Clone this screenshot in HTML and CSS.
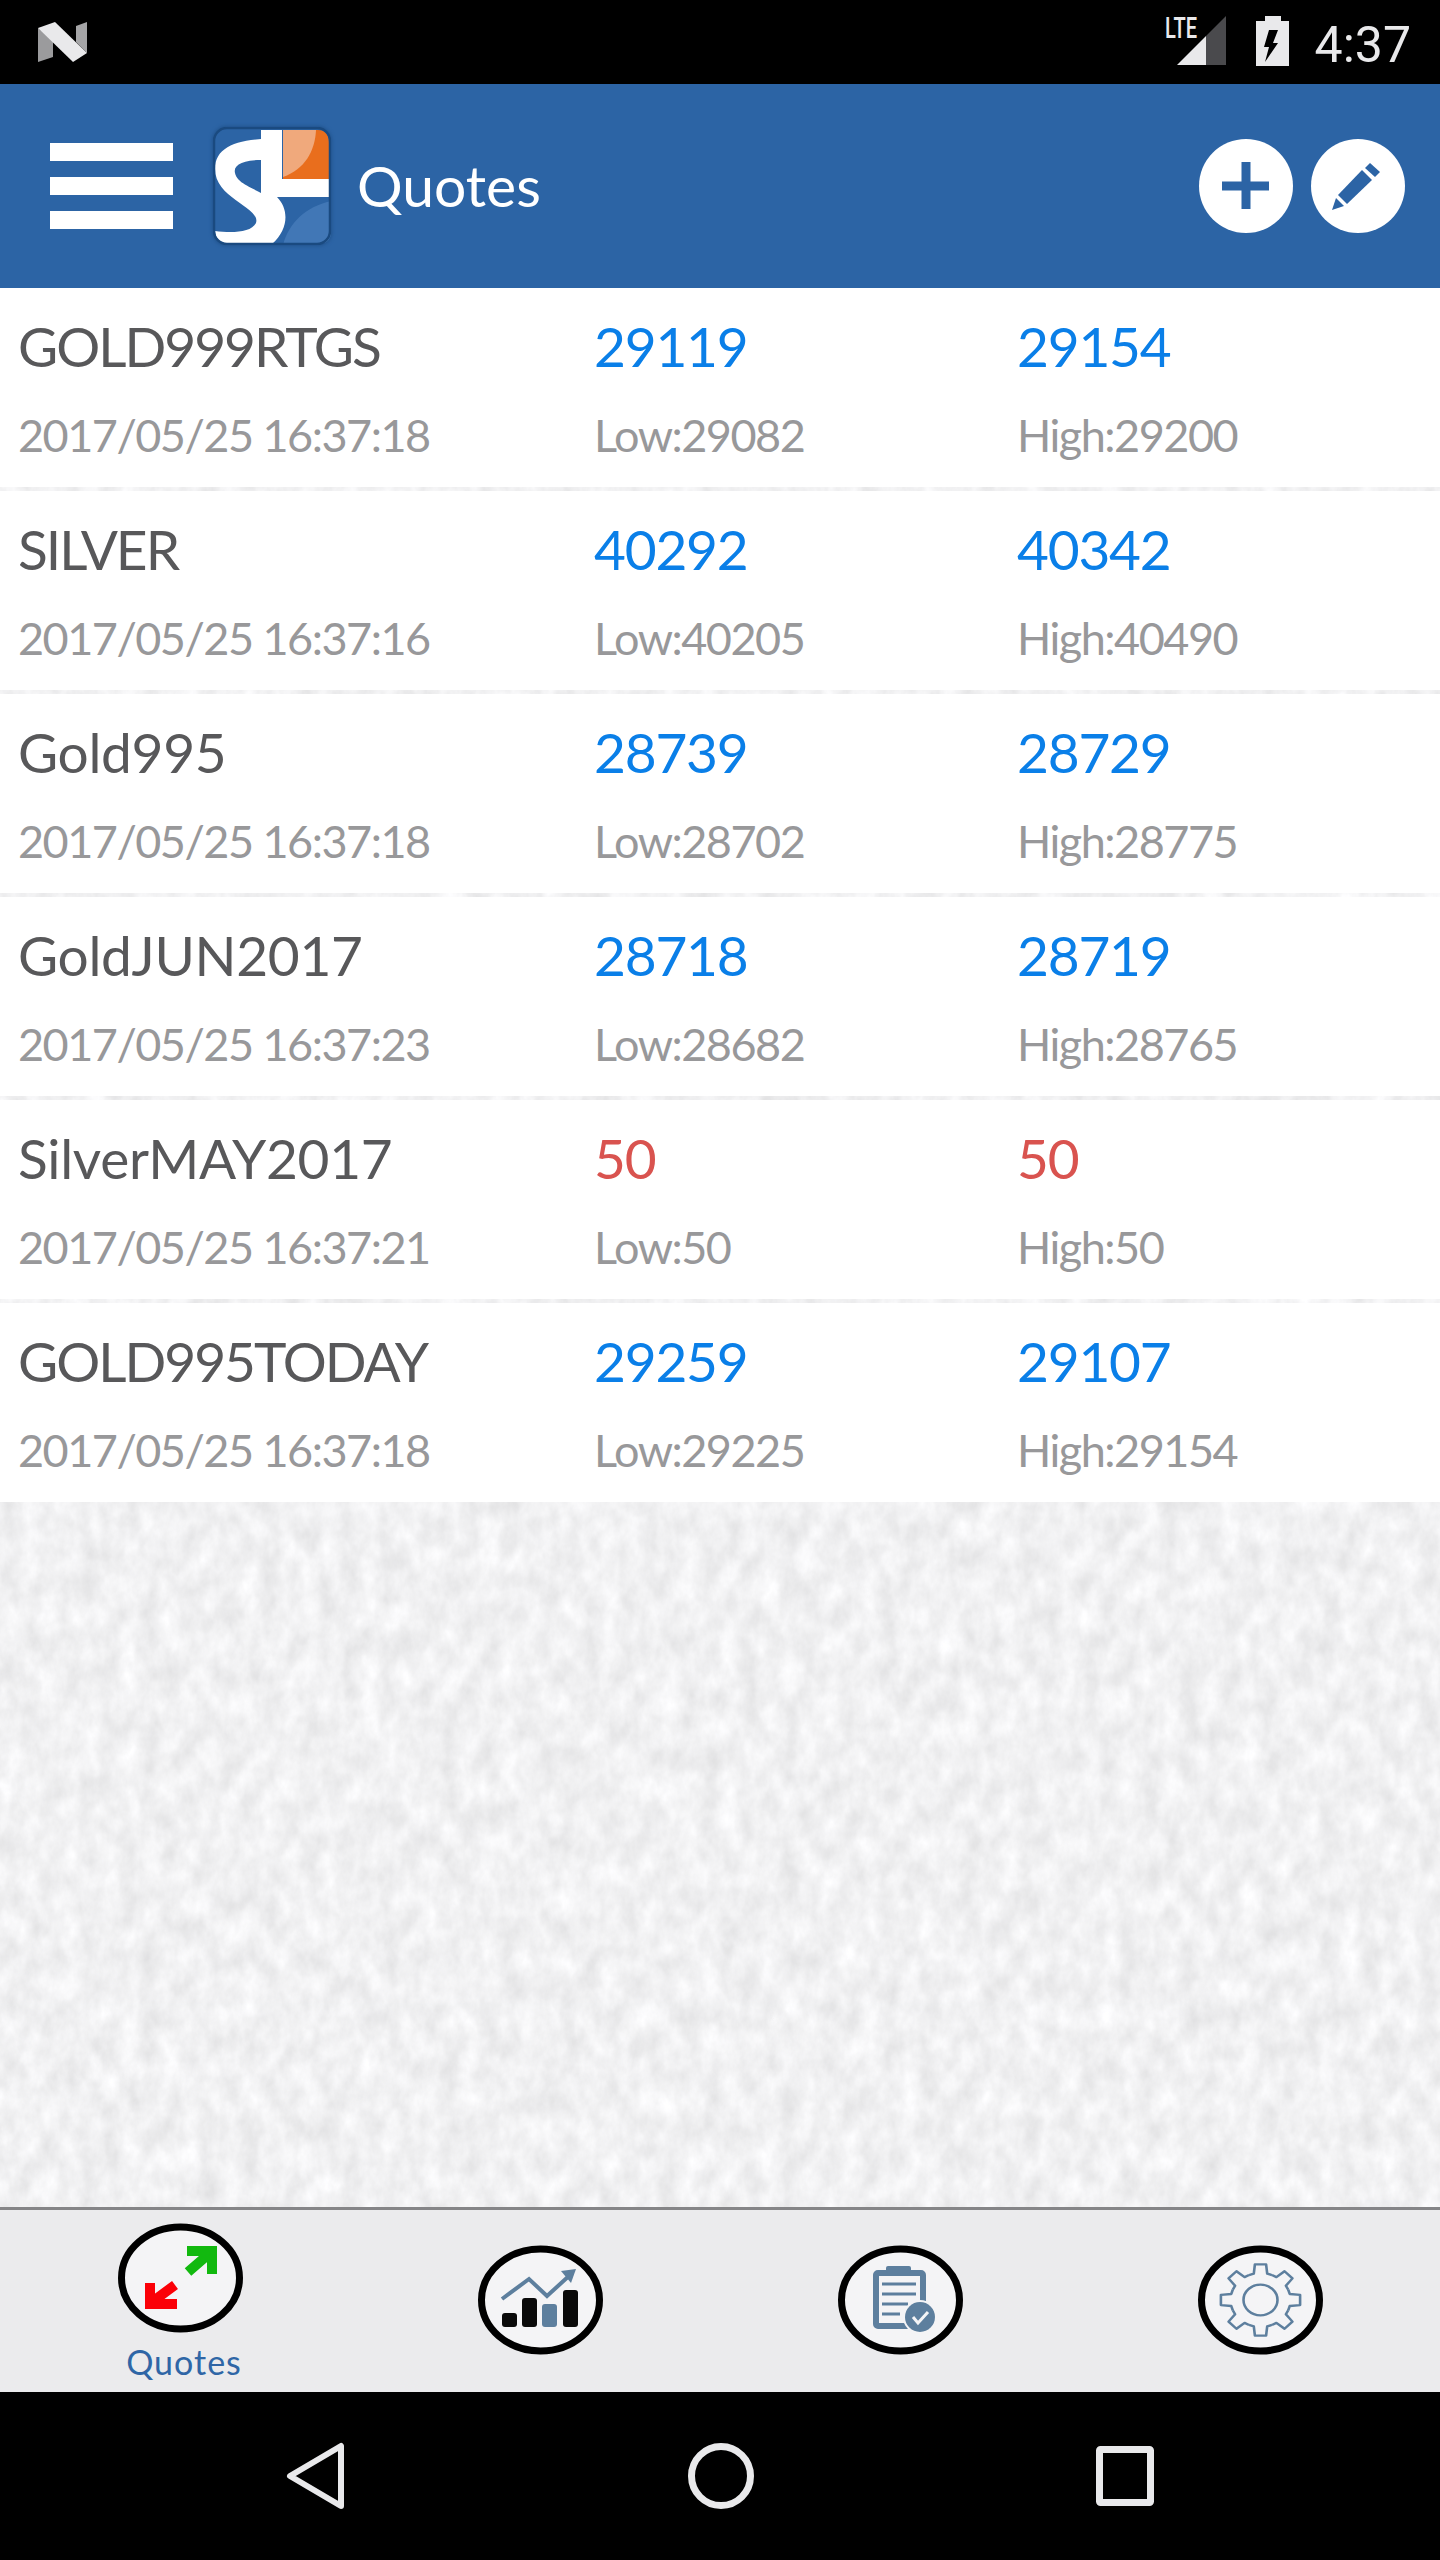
FILE: index.html
```html
<!DOCTYPE html>
<html lang="en">
<head>
    <meta charset="UTF-8">
    <meta name="viewport" content="width=device-width, initial-scale=1.0">
    <title>Quotes</title>
    <link rel="stylesheet" href="styles.css">
</head>
<body>
    <!-- Android status bar -->
    <div class="status-bar">
        <svg class="n-logo" width="50" height="41" viewBox="0 0 50 41">
            <polygon points="0,7 15,19 15,36 0,41" fill="#9b9b9d"/>
            <polygon points="38,5 49,1 49,32 38,21" fill="#a5a5a7"/>
            <polygon points="0,7 17,1 49,32 35,41" fill="#e9e9eb"/>
        </svg>
        <div class="status-right">
            <svg class="signal" width="61" height="59" viewBox="0 -10 61 59">
                <polygon points="41,20 61,0 61,49 41,49" fill="#4a4a4d"/>
                <polygon points="12,49 41,20 41,49" fill="#e9e9eb"/>
                <text class="lte" x="0" y="22" textLength="32" lengthAdjust="spacingAndGlyphs">LTE</text>
            </svg>
            <svg class="battery" width="33" height="50" viewBox="0 0 33 50">
                <path d="M9 0H25V5H33V50H0V5H9Z" fill="#e9e9eb"/>
                <polygon points="13,14 22,14 17,27 22,27 9,46 13,31 8,31" fill="#000"/>
            </svg>
            <span class="clock">4:37</span>
        </div>
    </div>

    <!-- App header -->
    <header class="app-header">
        <div class="burger"><span></span><span></span><span></span></div>
        <svg class="logo" width="118" height="118" viewBox="0 0 118 118">
            <rect x="1" y="1" width="116" height="116" rx="13" fill="#2c64a5"/>
            <path d="M70 118C76 96 92 80 118 74V105Q118 117 105 117Z" fill="#4177b6"/>
            <path d="M70 3H105Q116 3 116 16V52H70Z" fill="#e96e1d"/>
            <path d="M70 3H103C102 24 92 42 70 50Z" fill="#f0a97c"/>
            <path fill="#fff" fill-rule="evenodd" d="M48 3H69V52H116V70H64C76 82 76 102 59 117H18Q3 117 2 104C18 106 38 106 43 96C48 80 2 72 2 42C2 22 20 14 48 12ZM48 33C30 33 20 38 22 46C24 56 38 60 48 66Z"/>
            <rect x="1" y="1" width="116" height="116" rx="13" fill="none" stroke="#1a4a80" stroke-width="2.5"/>
        </svg>
        <h1 class="title">Quotes</h1>
        <div class="header-actions">
            <button class="round-btn">
                <svg width="94" height="94" viewBox="0 0 94 94">
                    <path d="M23 47H70M47 23V70" stroke="#2c64a5" stroke-width="9"/>
                </svg>
            </button>
            <button class="round-btn">
                <svg width="94" height="94" viewBox="0 0 94 94">
                    <g fill="#2c64a5">
                        <polygon points="59,24 69,33 64,38 54,29"/>
                        <polygon points="51,31 61,41 36,65 27,56"/>
                        <polygon points="25,59 33,67 21,71"/>
                    </g>
                </svg>
            </button>
        </div>
    </header>

    <!-- Quote rows -->
    <main class="content">
        <div class="quote-list">
            <div class="quote-row">
                <div class="name caps">GOLD999RTGS</div>
                <div class="price">29119</div>
                <div class="price">29154</div>
                <div class="sub">2017/05/25 16:37:18</div>
                <div class="sub">Low:29082</div>
                <div class="sub">High:29200</div>
            </div>
            <div class="quote-row">
                <div class="name caps">SILVER</div>
                <div class="price">40292</div>
                <div class="price">40342</div>
                <div class="sub">2017/05/25 16:37:16</div>
                <div class="sub">Low:40205</div>
                <div class="sub">High:40490</div>
            </div>
            <div class="quote-row">
                <div class="name">Gold995</div>
                <div class="price">28739</div>
                <div class="price">28729</div>
                <div class="sub">2017/05/25 16:37:18</div>
                <div class="sub">Low:28702</div>
                <div class="sub">High:28775</div>
            </div>
            <div class="quote-row">
                <div class="name">GoldJUN2017</div>
                <div class="price">28718</div>
                <div class="price">28719</div>
                <div class="sub">2017/05/25 16:37:23</div>
                <div class="sub">Low:28682</div>
                <div class="sub">High:28765</div>
            </div>
            <div class="quote-row">
                <div class="name">SilverMAY2017</div>
                <div class="price down">50</div>
                <div class="price down">50</div>
                <div class="sub">2017/05/25 16:37:21</div>
                <div class="sub">Low:50</div>
                <div class="sub">High:50</div>
            </div>
            <div class="quote-row">
                <div class="name caps">GOLD995TODAY</div>
                <div class="price">29259</div>
                <div class="price">29107</div>
                <div class="sub">2017/05/25 16:37:18</div>
                <div class="sub">Low:29225</div>
                <div class="sub">High:29154</div>
            </div>
        </div>
    </main>

    <!-- Bottom tabs -->
    <nav class="tab-bar">
        <div class="tab tab-active">
            <svg width="125" height="110" viewBox="0 0 125 110">
                <ellipse cx="62.5" cy="55" rx="59" ry="51" fill="#f4f4f6" stroke="#000" stroke-width="7"/>
                <path d="M69 28H94V51M92 30L70 49" fill="none" stroke="#12b90f" stroke-width="10"/>
                <path d="M32 60V81H59M34 79L57 62" fill="none" stroke="#fb0007" stroke-width="10"/>
            </svg>
            <span class="tab-label">Quotes</span>
        </div>
        <div class="tab">
            <svg width="125" height="110" viewBox="0 0 125 110">
                <ellipse cx="62.5" cy="55" rx="59" ry="51" fill="#f4f4f6" stroke="#000" stroke-width="7"/>
                <path d="M24 54L51 34L69 51L92 30" fill="none" stroke="#5d7f9e" stroke-width="4"/>
                <polygon points="83,26 98,24 93,38" fill="#5d7f9e"/>
                <rect x="24" y="68" width="15" height="14" rx="3" fill="#0a0a0a"/>
                <rect x="44" y="53" width="15" height="29" rx="3" fill="#0a0a0a"/>
                <rect x="64" y="59" width="15" height="23" rx="3" fill="#5d7f9e"/>
                <rect x="85" y="45" width="15" height="37" rx="3" fill="#0a0a0a"/>
            </svg>
        </div>
        <div class="tab">
            <svg width="125" height="110" viewBox="0 0 125 110">
                <ellipse cx="62.5" cy="55" rx="59" ry="51" fill="#f4f4f6" stroke="#000" stroke-width="7"/>
                <rect x="38" y="28" width="47" height="53" rx="2" fill="none" stroke="#5d7f9e" stroke-width="6"/>
                <rect x="48" y="21" width="25" height="7" rx="2" fill="#5d7f9e"/>
                <path d="M44 39H78M44 49H78M44 59H70M44 69H62" stroke="#5d7f9e" stroke-width="3"/>
                <circle cx="82" cy="72" r="17" fill="#f4f4f6"/>
                <circle cx="82" cy="72" r="15" fill="#5d7f9e"/>
                <path d="M75 72L80 78L90 67" fill="none" stroke="#f4f4f6" stroke-width="3"/>
            </svg>
        </div>
        <div class="tab">
            <svg width="125" height="110" viewBox="0 0 125 110">
                <ellipse cx="62.5" cy="55" rx="59" ry="51" fill="#f4f4f6" stroke="#000" stroke-width="7"/>
                <g transform="translate(62.5 55) scale(1 .9)" fill="none" stroke="#5d7f9e" stroke-width="2.6" stroke-linejoin="round">
                    <path id="tooth" d="M-11.5 -27.7L-6.7 -29.2L-5.6 -39.6H5.6L6.7 -29.2L11.5 -27.7"/>
                    <use href="#tooth" transform="rotate(45)"/>
                    <use href="#tooth" transform="rotate(90)"/>
                    <use href="#tooth" transform="rotate(135)"/>
                    <use href="#tooth" transform="rotate(180)"/>
                    <use href="#tooth" transform="rotate(225)"/>
                    <use href="#tooth" transform="rotate(270)"/>
                    <use href="#tooth" transform="rotate(315)"/>
                    <circle r="17"/>
                </g>
            </svg>
        </div>
    </nav>

    <!-- Android navigation bar -->
    <div class="nav-bar">
        <svg width="60" height="70" viewBox="0 0 60 70">
            <path d="M55 5V65L4 35Z" fill="none" stroke="#e9e9eb" stroke-width="6" stroke-linejoin="round"/>
        </svg>
        <svg width="66" height="66" viewBox="0 0 66 66">
            <circle cx="33" cy="33" r="29.5" fill="none" stroke="#e9e9eb" stroke-width="7"/>
        </svg>
        <svg width="58" height="60" viewBox="0 0 58 60">
            <rect x="3.5" y="3.5" width="51" height="53" rx="1" fill="none" stroke="#e9e9eb" stroke-width="7"/>
        </svg>
    </div>
</body>
</html>
```

FILE: styles.css
```css
body {
    font-family: 'Lato', 'Open Sans', sans-serif;
    background-color: #000;
    margin: 0;
    width: 1440px;
    height: 2560px;
    display: flex;
    flex-direction: column;
    overflow: hidden;
}

/* status bar */
.status-bar {
    height: 84px;
    flex: none;
    display: flex;
    align-items: flex-start;
    justify-content: space-between;
    padding: 6px 29px 0 38px;
    box-sizing: border-box;
    background-color: #000;
}

.n-logo {
    margin-top: 15px;
}

.status-right {
    display: flex;
    align-items: flex-start;
}

.lte {
    font-family: 'Roboto', sans-serif;
    font-size: 29px;
    font-weight: 500;
    fill: #e9e9eb;
}

.battery {
    margin: 10px 0 0 30px;
}

.clock {
    margin: 10px 0 0 26px;
    font-family: 'Roboto', sans-serif;
    font-size: 50px;
    line-height: 58px;
    color: #e9e9eb;
}

/* header */
.app-header {
    height: 204px;
    flex: none;
    display: flex;
    align-items: center;
    padding: 0 35px 0 50px;
    box-sizing: border-box;
    background-color: #2c64a5;
}

.burger {
    width: 123px;
    display: flex;
    flex-direction: column;
    gap: 16px;
}

.burger span {
    height: 18px;
    background-color: #fff;
}

.logo {
    margin-left: 40px;
    filter: drop-shadow(0 0 2px #1a4a80);
}

.title {
    margin: 0 0 3px 26px;
    font-size: 57px;
    font-weight: 400;
    color: #fff;
}

.header-actions {
    margin-left: auto;
    display: flex;
    gap: 18px;
}

.round-btn {
    width: 94px;
    height: 94px;
    padding: 0;
    border: none;
    border-radius: 50%;
    background-color: #fff;
}

.round-btn svg {
    display: block;
}

/* quote list */
.content {
    flex: 1;
    background-color: #f2f2f4;
    background-image: url("data:image/svg+xml,%3Csvg xmlns='http://www.w3.org/2000/svg' width='1440' height='1920'%3E%3Cfilter id='n' color-interpolation-filters='sRGB'%3E%3CfeTurbulence type='fractalNoise' baseFrequency='.05 .035' numOctaves='5' seed='4'/%3E%3CfeColorMatrix values='.14 0 0 0 .875 .14 0 0 0 .875 .14 0 0 0 .88 0 0 0 0 1'/%3E%3C/filter%3E%3Crect width='1440' height='1920' filter='url(%23n)'/%3E%3C/svg%3E");
}

.quote-list {
    display: flex;
    flex-direction: column;
    gap: 4px;
}

.quote-row {
    height: 199px;
    display: grid;
    grid-template-columns: 576px 423px 1fr;
    grid-template-rows: 90px 85px;
    padding: 24px 0 0 18px;
    box-sizing: border-box;
    background-color: #fff;
}

.name, .price {
    font-size: 55px;
    line-height: 68px;
    letter-spacing: -1.2px;
    color: #58585a;
}

.name {
    letter-spacing: -0.3px;
}

.name.caps {
    letter-spacing: -2px;
}

.price {
    color: #0a7fe8;
}

.price.down {
    color: #d9534f;
}

.sub {
    font-size: 45px;
    line-height: 66px;
    letter-spacing: -1.5px;
    color: #98989a;
}

/* bottom tabs */
.tab-bar {
    height: 185px;
    flex: none;
    display: grid;
    grid-template-columns: repeat(4, 1fr);
    border-top: 3px solid #858587;
    box-sizing: border-box;
    background-color: #ebebed;
}

.tab {
    display: flex;
    flex-direction: column;
    align-items: center;
    padding-top: 35px;
}

.tab-active {
    padding-top: 13px;
}

.tab-label {
    margin: 11px 0 0 8px;
    font-size: 34px;
    line-height: 36px;
    letter-spacing: 1px;
    color: #2f66a6;
}

/* android nav bar */
.nav-bar {
    height: 168px;
    flex: none;
    display: flex;
    align-items: center;
    justify-content: center;
    gap: 342px;
    background-color: #000;
}
```
